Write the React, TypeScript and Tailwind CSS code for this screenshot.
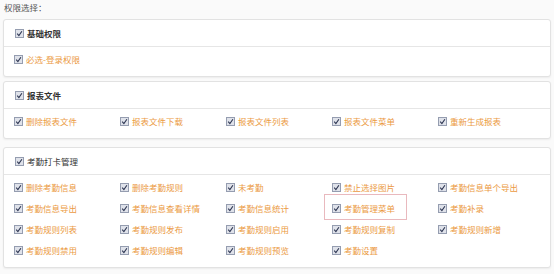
const groups = [
  {
    title: '基础权限',
    bold: true,
    items: ['必选-登录权限'],
  },
  {
    title: '报表文件',
    bold: true,
    items: ['删除报表文件', '报表文件下载', '报表文件列表', '报表文件菜单', '重新生成报表'],
  },
  {
    title: '考勤打卡管理',
    bold: false,
    items: [
      '删除考勤信息', '删除考勤规则', '未考勤', '禁止选择图片', '考勤信息单个导出',
      '考勤信息导出', '考勤信息查看详情', '考勤信息统计', '考勤管理菜单', '考勤补录',
      '考勤规则列表', '考勤规则发布', '考勤规则启用', '考勤规则复制', '考勤规则新增',
      '考勤规则禁用', '考勤规则编辑', '考勤规则预览', '考勤设置',
    ],
  },
];

function Check() {
  return (
    <svg width="9" height="9" viewBox="0 0 9 9" className="shrink-0">
      <rect x="0.5" y="0.5" width="8" height="8" fill="#dfe2ea" stroke="#959db0" />
      <path d="M2.2 4.7 L3.9 6.6 L6.9 2.3" fill="none" stroke="#2d3652" strokeWidth="1.1" />
    </svg>
  );
}

export default function App() {
  return (
    <div className="w-[554px] h-[274px] overflow-hidden bg-[#fafafa] px-[3px] font-['Noto_Sans_CJK_SC',sans-serif] text-[8.5px]">
      <div className="h-[19px] pl-[1px] leading-[14px] text-[#555]">权限选择：</div>

      {groups.map((g, gi) => (
        <div
          key={g.title}
          className={`bg-white border border-[#e2e2e2] rounded-[3px] shadow-[0_1px_2px_rgba(0,0,0,0.06)] ${gi === 0 ? 'mb-[4px]' : 'mb-[8px]'}`}
        >
          {/* 标题 */}
          <div className="h-[27px] flex items-center gap-[3px] pl-[11px] border-b border-[#e6e6e6]">
            <Check />
            <span className={`text-[#333] ${g.bold ? 'font-bold' : ''}`}>{g.title}</span>
          </div>

          {/* 权限项 */}
          <div className="grid grid-cols-[repeat(5,106px)] px-[10px] pt-[2px] pb-[6px]">
            {g.items.map(item => (
              <div key={item} className="relative h-[21px] flex items-center gap-[3px]">
                {item === '考勤管理菜单' && (
                  <span className="absolute -left-[8px] -top-[4px] w-[83px] h-[26px] border border-[#e9b9be]" />
                )}
                <Check />
                <span className="text-[#eb9a43] whitespace-nowrap">{item}</span>
              </div>
            ))}
          </div>
        </div>
      ))}
    </div>
  );
}
